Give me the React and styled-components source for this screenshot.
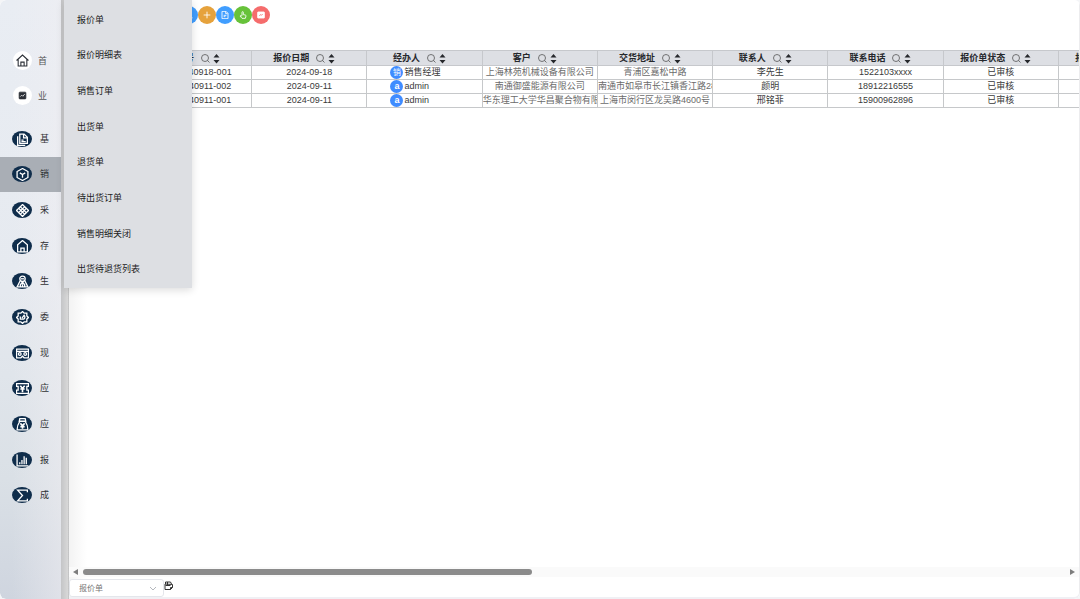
import React from 'react';
import styled, { createGlobalStyle } from 'styled-components';

const GlobalStyle = createGlobalStyle`
    *, *::before, *::after {
        box-sizing: border-box;
    }

    body {
        margin: 0;
        background: #f4f5f7;
        color: #303133;
        font-family: "Liberation Sans", "Noto Sans CJK SC", sans-serif;
        font-size: 9px;
        line-height: 14px;
    }

    button, select {
        font-family: inherit;
    }

    a {
        color: inherit;
        text-decoration: none;
    }
`;

const Page = styled.div`
    position: relative;
    display: flex;
    height: 100vh;
    overflow: hidden;
    border-radius: 6px;
    background: #fff;
`;

const Sidebar = styled.nav`
    width: 61px;
    flex: none;
    padding-top: 43px;
    border-radius: 6px 0 0 6px;
    background:
        linear-gradient(90deg, rgba(240,238,242,0) 20%, rgba(240,238,242,0.5) 100%),
        linear-gradient(180deg, #e9edf3 0%, #e6eaf0 45%, #dae0e6 80%, #cfd5df 100%);
`;

const QuickLink = styled.a`
    display: flex;
    align-items: center;
    gap: 6px;
    height: 35px;
    padding-left: 13px;
    color: #555;
    line-height: 12px;
`;

const QuickIcon = styled.span`
    display: flex;
    justify-content: center;
    align-items: center;
    width: 19px;
    height: 19px;
    border-radius: 50%;
    background: #fff;
    color: #2b2f36;
`;

const ModuleList = styled.div`
    display: grid;
    grid-auto-rows: 1fr;
    height: 392px;
    margin-top: 8px;
`;

const ModuleLink = styled.a`
    display: flex;
    align-items: center;
    gap: 8px;
    padding-left: 12px;
    color: #303133;
    background: ${props => (props.$active ? '#a9aeb5' : 'transparent')};
`;

const ModuleIcon = styled.span`
    display: flex;
    justify-content: center;
    align-items: center;
    width: 20px;
    height: 16px;
    padding-top: 1px;
    border-radius: 50%;
    background: #0f2d4b;
    color: #fff;
`;

const Gutter = styled.div`
    width: 8px;
    flex: none;
    border-right: 1px dotted #c4c4c4;
    background: linear-gradient(90deg, #c4c5c7, #d8d8d8);
`;

const Submenu = styled.div`
    position: absolute;
    top: 0;
    left: 64px;
    z-index: 2;
    display: grid;
    grid-auto-rows: 1fr;
    width: 128px;
    height: 288px;
    padding: 2px 0 1px;
    background: #dddfe3;
    box-shadow: 0 2px 8px rgba(0,0,0,0.14);
`;

const SubmenuLink = styled.a`
    display: flex;
    align-items: center;
    padding-left: 13px;
    color: #222;
`;

const Main = styled.main`
    display: flex;
    flex: 1;
    flex-direction: column;
    min-width: 0;
    border-right: 1px solid #ececee;
    border-bottom: 2px solid #f0f0f4;
    border-radius: 0 0 6px 0;
    background: linear-gradient(90deg, #f3f3f3, #fff 18px);
`;

const Toolbar = styled.div`
    display: flex;
    padding: 6px 0 26px 111px;
`;

const RoundButton = styled.button`
    display: flex;
    justify-content: center;
    align-items: center;
    width: 18px;
    height: 18px;
    padding: 0;
    border: 0;
    border-radius: 50%;
    background: ${props => props.$color};
    color: #fff;
    cursor: pointer;
`;

const TableArea = styled.div`
    flex: 1;
    overflow: hidden;
`;

const Table = styled.table`
    width: 1105px;
    table-layout: fixed;
    border-collapse: collapse;
`;

const HeadCell = styled.th`
    width: ${props => (props.$narrow ? '67px' : 'auto')};
    height: 15px;
    padding: 0 10px 0 0;
    border: 1px solid #c6c8cc;
    background: #dddfe4;
    color: #26282c;
    font-weight: bold;
    line-height: 14px;
`;

const HeadContent = styled.span`
    display: flex;
    justify-content: center;
    align-items: center;
    white-space: nowrap;
`;

const SearchIcon = styled.svg`
    margin: 0 3px 0 7px;
    color: #555;
`;

const Cell = styled.td`
    height: 14px;
    padding: 0;
    overflow: hidden;
    border: 1px solid #c6c8ca;
    background: #fff;
    color: ${props => (props.$muted ? '#6b6b6b' : '#3a3a3a')};
    line-height: 13px;
    text-align: ${props => (props.$left ? 'left' : 'center')};
    white-space: nowrap;
`;

const Person = styled.span`
    display: flex;
    align-items: center;
    gap: 1px;
    height: 13px;
    padding-left: 23px;
`;

const Avatar = styled.span`
    width: 13px;
    height: 13px;
    border-radius: 50%;
    background: #3f8cff;
    color: #fff;
    font-size: ${props => (props.$latin ? '9px' : '8px')};
    font-weight: ${props => (props.$latin ? 'bold' : 'normal')};
    text-align: center;
`;

const ScrollRow = styled.div`
    display: flex;
    align-items: center;
    gap: 4px;
    height: 10px;
    padding: 0 4px;
    background: #fafafa;
`;

const ScrollButton = styled.button`
    display: flex;
    padding: 0;
    border: 0;
    background: none;
    color: #7d7d7d;
`;

const ScrollTrack = styled.div`
    flex: 1;
`;

const ScrollThumb = styled.div`
    height: 6px;
    border-radius: 3px;
    background: #8b8b8b;
`;

const Footer = styled.footer`
    display: flex;
    align-items: flex-start;
    padding-top: 2px;
`;

const SelectBox = styled.label`
    position: relative;
    width: 95px;
`;

const Select = styled.select`
    display: block;
    width: 100%;
    height: 18px;
    padding: 0 9px;
    border: 1px solid #e4e6eb;
    border-radius: 3px;
    appearance: none;
    background: #fff;
    color: #777;
    font-size: 8px;
`;

const Chevron = styled.svg`
    position: absolute;
    top: 7px;
    right: 7px;
    color: #b4b7bd;
    pointer-events: none;
`;

const PrintButton = styled.button`
    display: flex;
    padding: 2px 0;
    border: 0;
    background: none;
    color: #333;
`;

const Icon = ({ size = 13, stroke = 2, children }) => (
    <svg
        width={size}
        height={size}
        viewBox="0 0 24 24"
        fill="none"
        stroke="currentColor"
        strokeWidth={stroke}
        aria-hidden="true"
    >
        {children}
    </svg>
);

const icons = {
    home: (
        <>
            <path d="M1 12 12 2l11 10M4 10v12h16V10" />
            <path d="M9 22v-7h6v7" />
        </>
    ),
    board: (
        <>
            <rect x="3" y="3" width="18" height="18" rx="2" fill="currentColor" />
            <path d="m6 15 4-4 3 3 5-6" stroke="#fff" />
        </>
    ),
    files: (
        <>
            <path d="M7 2h8l6 6v11H7z" />
            <path d="M14 2v7h7M10 13h4M10 16h8M3 6v17h14" />
        </>
    ),
    box: (
        <>
            <path d="m12 1 10 5.500v11L12 23 2 17.500v-11z" />
            <path d="m7 9 5 3 5-3M12 12v6" />
        </>
    ),
    diamonds: (
        <path d="m12 1 4 4-4 4-4-4zM12 15l4 4-4 4-4-4zM5 8l4 4-4 4-4-4zM19 8l4 4-4 4-4-4zM8 5l-3 3M16 5l3 3M8 19l-3-3M16 19l3-3M9 12l3-3 3 3-3 3z" />
    ),
    warehouse: (
        <>
            <path d="M3 22V9l9-8 9 8v13z" />
            <path d="M9 22v-7h6v7" />
        </>
    ),
    worker: (
        <>
            <circle cx="12" cy="7" r="5" />
            <path d="M8 10 2 22h20l-6-12M8 22v-4l4-5 4 5v4M12 17v5" />
            <path d="M9 7h6" />
        </>
    ),
    gear: (
        <>
            <path d="m12 1 3 3h5v5l3 3-3 3v5h-5l-3 3-3-3H4v-5l-3-3 3-3V4h5z" />
            <path d="M8 10v5h6c3-1 3-5 1-7l-4 5" />
        </>
    ),
    cash: (
        <>
            <path d="M1 4h22v16h-8l-3-3-3 3H1zM1 8h22" />
            <circle cx="7" cy="13" r="2.500" />
            <circle cx="17" cy="13" r="2.500" />
        </>
    ),
    coupon: (
        <>
            <path d="M1 3h22v5h-3v7h3v6H1v-6h3V8H1z" />
            <path d="m8 7 4 5 4-5M12 11v8M8 13h8" strokeWidth="3" />
        </>
    ),
    purse: (
        <>
            <path d="M7 1h10l1 5H6zM7 6c-2 3-5 9-5 16h20c0-7-3-13-5-16" />
            <path d="m8 10 4 4 4-4M12 13v7M8 16h8" strokeWidth="3" />
        </>
    ),
    bars: <path d="M2 1v21h21M7 19v-4M11 19v-8M15 19V4M19 19V7" />,
    sigma: <path d="M21 6V2H3l9 10-9 10h18v-4" />,
    user: (
        <>
            <circle cx="12" cy="8" r="5" />
            <path d="M3 22c0-5 4-8 9-8s9 3 9 8" />
        </>
    ),
    plus: <path d="M12 2v20M2 12h20" />,
    doc: (
        <>
            <path d="M3 1h12l6 6v16H3z" />
            <path d="M14 2v6h6M8 13h8M8 17h5" />
        </>
    ),
    pointer: (
        <path d="M9 14V4a2 2 0 0 1 4 0v7l6 1c2 0 2 2 2 3l-2 7H9l-6-7c1-2 3-2 6 1" />
    ),
    chart: (
        <>
            <rect x="2" y="3" width="20" height="18" rx="1" fill="currentColor" />
            <path d="m7 14 3-3 3 2 4-4" stroke="#f56c6c" />
        </>
    ),
};

const modules = [
    { icon: 'files', label: '基' },
    { icon: 'box', label: '销', active: true },
    { icon: 'diamonds', label: '采' },
    { icon: 'warehouse', label: '存' },
    { icon: 'worker', label: '生' },
    { icon: 'gear', label: '委' },
    { icon: 'cash', label: '现' },
    { icon: 'coupon', label: '应' },
    { icon: 'purse', label: '应' },
    { icon: 'bars', label: '报' },
    { icon: 'sigma', label: '成' },
];

const submenu = [
    '报价单',
    '报价明细表',
    '销售订单',
    '出货单',
    '退货单',
    '待出货订单',
    '销售明细关闭',
    '出货待退货列表',
];

const actions = [
    { icon: 'user', color: '#409eff', label: '用户' },
    { icon: 'plus', color: '#e6a23c', label: '新增' },
    { icon: 'doc', color: '#409eff', label: '单据' },
    { icon: 'pointer', color: '#67c23a', label: '选择' },
    { icon: 'chart', color: '#f56c6c', label: '报表' },
];

const columns = [
    '报价单号',
    '报价日期',
    '经办人',
    '客户',
    '交货地址',
    '联系人',
    '联系电话',
    '报价单状态',
    '报价单备注',
];

const rows = [
    {
        code: 'BJD20240918-001',
        date: '2024-09-18',
        person: '销售经理',
        customer: '上海林苑机械设备有限公司',
        address: '青浦区嘉松中路',
        contact: '李先生',
        phone: '1522103xxxx',
        status: '已审核',
    },
    {
        code: 'BJD20240911-002',
        date: '2024-09-11',
        person: 'admin',
        customer: '南通御盛能源有限公司',
        address: '南通市如皋市长江镇香江路28',
        contact: '颜明',
        phone: '18912216555',
        status: '已审核',
    },
    {
        code: 'BJD20240911-001',
        date: '2024-09-11',
        person: 'admin',
        customer: '华东理工大学华昌聚合物有限',
        address: '上海市闵行区龙吴路4600号',
        contact: '邢铭菲',
        phone: '15900962896',
        status: '已审核',
    },
];

const scroll = { visible: 1011, content: 2211 };

const ColumnHead = ({ title }) => (
    <HeadCell>
        <HeadContent>
            {title}
            <SearchIcon width="9" height="9" viewBox="0 0 18 18" fill="none" stroke="currentColor" strokeWidth="1.600">
                <circle cx="8" cy="8" r="7" />
                <path d="m13 13 4 4" />
            </SearchIcon>
            <svg width="7" height="12" viewBox="0 0 7 12" fill="#26282c">
                <path d="M3.500 2 6.500 5.500h-6zM3.500 11.500l3-3.500h-6z" />
            </svg>
        </HeadContent>
    </HeadCell>
);

const QuoteTable = () => (
    <Table>
        <thead>
            <tr>
                <HeadCell $narrow />
                {columns.map(title => <ColumnHead key={title} title={title} />)}
            </tr>
        </thead>
        <tbody>
            {rows.map(row => (
                <tr key={row.code}>
                    <Cell />
                    <Cell>{row.code}</Cell>
                    <Cell>{row.date}</Cell>
                    <Cell>
                        <Person>
                            <Avatar $latin={row.person === 'admin'}>{row.person[0]}</Avatar>
                            {row.person}
                        </Person>
                    </Cell>
                    <Cell $muted $left={row.customer.length > 12}>{row.customer}</Cell>
                    <Cell $muted>{row.address}</Cell>
                    <Cell>{row.contact}</Cell>
                    <Cell>{row.phone}</Cell>
                    <Cell>{row.status}</Cell>
                    <Cell />
                </tr>
            ))}
        </tbody>
    </Table>
);

const App = () => (
    <Page>
        <GlobalStyle />
        <Sidebar>
            <QuickLink href="#home">
                <QuickIcon><Icon>{icons.home}</Icon></QuickIcon>
                首
            </QuickLink>
            <QuickLink href="#board">
                <QuickIcon><Icon size={9}>{icons.board}</Icon></QuickIcon>
                业
            </QuickLink>
            <ModuleList>
                {modules.map(item => (
                    <ModuleLink key={item.icon} href={`#${item.icon}`} $active={item.active}>
                        <ModuleIcon><Icon stroke={2.4}>{icons[item.icon]}</Icon></ModuleIcon>
                        {item.label}
                    </ModuleLink>
                ))}
            </ModuleList>
        </Sidebar>
        <Gutter />
        <Submenu>
            {submenu.map(label => <SubmenuLink key={label} href="#sales">{label}</SubmenuLink>)}
        </Submenu>
        <Main>
            <Toolbar>
                {actions.map(action => (
                    <RoundButton key={action.icon} type="button" $color={action.color} aria-label={action.label}>
                        <Icon size={8} stroke={2.6}>{icons[action.icon]}</Icon>
                    </RoundButton>
                ))}
            </Toolbar>
            <TableArea>
                <QuoteTable />
            </TableArea>
            <ScrollRow>
                <ScrollButton type="button" aria-label="向左">
                    <svg width="6" height="8" viewBox="0 0 6 8" fill="currentColor"><path d="M5 1v6L0 4z" /></svg>
                </ScrollButton>
                <ScrollTrack>
                    <ScrollThumb style={{ width: `${scroll.visible / scroll.content * 100}%` }} />
                </ScrollTrack>
                <ScrollButton type="button" aria-label="向右">
                    <svg width="6" height="8" viewBox="0 0 6 8" fill="currentColor"><path d="M1 1v6l5-3z" /></svg>
                </ScrollButton>
            </ScrollRow>
            <Footer>
                <SelectBox>
                    <Select aria-label="单据类型" defaultValue="报价单">
                        <option>报价单</option>
                    </Select>
                    <Chevron width="8" height="6" viewBox="0 0 8 6" fill="none" stroke="currentColor">
                        <path d="m1 1 3 3 3-3" />
                    </Chevron>
                </SelectBox>
                <PrintButton type="button" aria-label="打印">
                    <svg width="10" height="10" viewBox="0 0 10 10" fill="none" stroke="currentColor">
                        <path d="M1 3v5.500h5.500l2-2V3.500zM1.500 3V1h5l1 2M1.500 4.500h5M3.500 1v3M6.500 8.500v-2h2" />
                    </svg>
                </PrintButton>
            </Footer>
        </Main>
    </Page>
);

export default App;
